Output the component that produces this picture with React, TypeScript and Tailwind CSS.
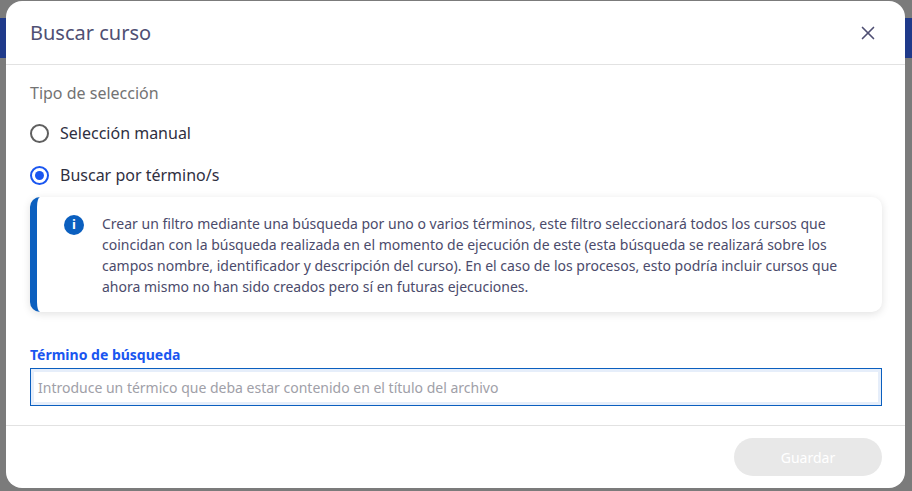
import { X } from "lucide-react";

const App = () => {
  return (
    <div className="relative w-[912px] h-[491px] overflow-hidden bg-[#7b7b7b]" style={{ fontFamily: '"Noto Sans", "Open Sans", sans-serif' }}>
      {/* background hints */}
      <div className="absolute left-0 top-[18px] w-[10px] h-[40px] bg-[#1f3a8a]" />
      <div className="absolute right-0 top-[18px] w-[10px] h-[40px] bg-[#1f3a8a]" />
      <div className="absolute left-[6px] top-[1px] w-[899px] h-[487px] bg-white rounded-[16px] flex flex-col">
        <div className="h-[64px] flex items-center justify-between pl-[24px] pr-[26px] border-b border-[#e2e2e2]">
          <h2 className="text-[20px] text-[#4f4f73]">Buscar curso</h2>
          <X className="w-[22px] h-[22px] text-[#4f4f73]" strokeWidth={1.8} />
        </div>
        <div className="flex-1 px-[24px] pt-[16px] border-b border-[#e2e2e2]">
          <div className="text-[16px] text-[#737373]">Tipo de selección</div>
          <div className="mt-[16px] flex items-center gap-[11px] h-[24px]">
            <span className="w-[19px] h-[19px] rounded-full border-2 border-[#5f5f5f]" />
            <span className="text-[16px] text-[#2f2f3f]">Selección manual</span>
          </div>
          <div className="mt-[18px] flex items-center gap-[11px] h-[24px]">
            <span className="w-[19px] h-[19px] rounded-full border-2 border-[#1a56f0] flex items-center justify-center">
              <span className="w-[9px] h-[9px] rounded-full bg-[#1a56f0]" />
            </span>
            <span className="text-[16px] text-[#2f2f3f]">Buscar por término/s</span>
          </div>
          <div className="mt-[10px] w-[852px] h-[115px] rounded-[10px] bg-white shadow-[0_2px_8px_rgba(0,0,0,0.12)] border-l-[7px] border-[#0b5fbf] flex pl-[27px] pr-[20px] pt-[16px] gap-[18px]">
            <span className="mt-[2px] w-[20px] h-[20px] shrink-0 rounded-full bg-[#0b5fbf] text-white text-[13px] font-bold flex items-center justify-center">i</span>
            <p className="text-[14px] leading-[21px] text-[#4b4b6b]">
              Crear un filtro mediante una búsqueda por uno o varios términos, este filtro seleccionará todos los cursos que coincidan con la búsqueda realizada en el momento de ejecución de este (esta búsqueda se realizará sobre los campos nombre, identificador y descripción del curso). En el caso de los procesos, esto podría incluir cursos que ahora mismo no han sido creados pero sí en futuras ejecuciones.
            </p>
          </div>
          <div className="mt-[32px] text-[14px] font-bold text-[#1a56f0]">Término de búsqueda</div>
          <div className="mt-[3px] w-[852px] h-[38px] border border-[#0b5fbf]">
            <div className="h-full bg-white border-[3px] border-[#e6eefa] flex items-center px-[4px] text-[14px] text-[#a0a0a8]">
              Introduce un térmico que deba estar contenido en el título del archivo
            </div>
          </div>
        </div>
        <div className="h-[62px] flex items-center justify-end pr-[23px]">
          <button className="w-[148px] h-[38px] rounded-full bg-[#e8e8e8] text-[14px] text-white">Guardar</button>
        </div>
      </div>
    </div>
  );
};

export default App;
